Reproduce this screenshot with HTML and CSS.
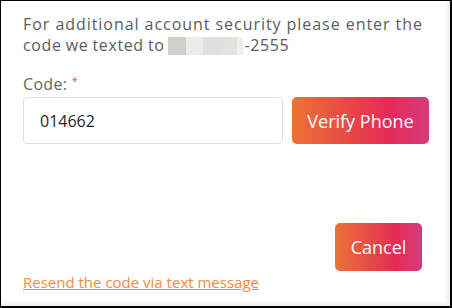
FILE: index.html
```html
<!DOCTYPE html>
<html>
<head>
<meta charset="utf-8">
<link rel="stylesheet" href="styles.css">
</head>
<body>
<div class="dialog">
  <p class="intro"><span class="line line-1">For additional account security please enter the</span><span class="line line-2">code we texted to <span class="mask"><i class="m1"></i><i class="m2"></i><i class="m3"></i><i class="m4"></i><i class="m5"></i></span><span class="tail">-2555</span></span></p>
  <label class="label" for="code">Code: <span class="req">*</span></label>
  <div class="row">
    <input id="code" class="input" type="text" value="014662">
    <button class="btn btn-verify">Verify Phone</button>
  </div>
  <div class="actions">
    <button class="btn btn-cancel">Cancel</button>
  </div>
  <a class="resend" href="#">Resend the code via text message</a>
</div>
</body>
</html>
```
FILE: styles.css
```css
html, body {
  margin: 0;
  padding: 0;
  background: #fff;
}
.dialog {
  width: 452px;
  height: 308px;
  box-sizing: border-box;
  border-top: 1px solid #000;
  border-left: 1px solid #000;
  border-right: 2px solid #000;
  border-bottom: 2px solid #000;
  box-shadow: inset -4px -4px 4px -1px rgba(0,0,0,0.07);
  padding: 13px 22px 0 22px;
  font-family: "Open Sans", "DejaVu Sans", sans-serif;
  color: #5a5a5a;
  display: flex;
  flex-direction: column;
  align-items: flex-start;
}
.intro {
  margin: 0;
  font-size: 16px;
  line-height: 21px;
  color: #5c5c5c;
}
.line {
  display: flex;
  align-items: center;
  white-space: nowrap;
}
.line-1 {
  letter-spacing: 0.95px;
}
.line-2 {
  letter-spacing: 0.6px;
  word-spacing: -0.5px;
}
.mask {
  display: flex;
  height: 18px;
  margin-left: 4px;
  margin-right: 1px;
}
.mask i { display: block; height: 18px; }
.m1 { width: 18px; background: #d2cec8; }
.m2 { width: 17px; background: #e9edec; }
.m3 { width: 18px; background: #dde0e4; }
.m4 { width: 16px; background: #e5e2dc; }
.m5 { width: 6px; background: #eef0f2; }
.label {
  margin-top: 15px;
  font-size: 16px;
  letter-spacing: 0.3px;
  line-height: 20px;
  color: #666;
}
.req {
  color: #ee4d6a;
  font-size: 11px;
  vertical-align: 5px;
}
.row {
  display: flex;
  gap: 9px;
  margin-top: 3px;
}
.input {
  width: 260px;
  height: 47px;
  box-sizing: border-box;
  border: 1px solid #dcdde1;
  border-radius: 4px;
  padding: 0 16px;
  font-family: inherit;
  font-size: 16px;
  color: #1f1f2e;
  outline: none;
}
.btn {
  border: none;
  border-radius: 5px;
  color: #fff;
  font-family: inherit;
  font-size: 18px;
  background: linear-gradient(90deg, #ec7236 0%, #e6404a 50%, #e52a58 70%, #d63c7c 100%);
  cursor: pointer;
}
.btn-verify {
  width: 137px;
  height: 47px;
}
.actions {
  align-self: stretch;
  display: flex;
  justify-content: flex-end;
  margin-top: 79px;
  padding-right: 6px;
}
.btn-cancel {
  width: 87px;
  height: 48px;
}
.resend {
  margin-top: 1px;
  font-size: 15px;
  line-height: 20px;
  color: #f28a3f;
  text-decoration: underline;
}
```
